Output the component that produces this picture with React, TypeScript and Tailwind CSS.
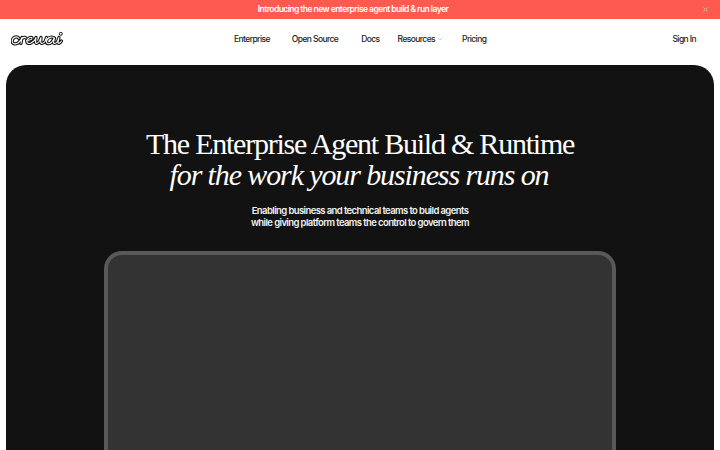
import { X, ChevronDown } from 'lucide-react';

const navLinks = [
  { label: 'Enterprise', className: 'ml-[171px]' },
  { label: 'Open Source', className: 'ml-[22px]' },
  { label: 'Docs', className: 'ml-[23px]' },
  { label: 'Resources', className: 'ml-[18px]' },
  { label: 'Pricing', className: 'ml-[18px]' },
];

const logoPath =
  'M8 7.5C6 4.5 1.5 6 1.2 10C1 13 4 13.5 7 12L9.5 9.5L11 6.5L10 12.5M11 8C12 6 14 6 15 7M15.5 9.5C18 9.5 21.5 8.5 21 6.8C20 5.5 16.5 7 15.8 10C15.5 12.5 18 13 20 12L23.5 9.5L25 6.5L24.5 11.5C25 13 27 12.5 28.5 10L30 6.5L29.7 11.5C30 13 32.5 12.5 34 10.5L35.5 6.5M43.5 7.5C41 4.5 36 6.5 35.5 10.5C35.3 13 38 13.5 40.5 11.5L43.5 7L42.5 11.5C42.5 13 44.5 12.8 46.5 10.5L48 6.5L47 11.5C47 13 49 12.5 50.5 10';

function Logo() {
  return (
    <svg width="52" height="16" viewBox="0 0 52 16" fill="none" className="block shrink-0">
      <path d={logoPath} stroke="#111" strokeWidth="3.2" strokeLinecap="round" strokeLinejoin="round" />
      <path d={logoPath} stroke="#fff" strokeWidth="1.1" strokeLinecap="round" strokeLinejoin="round" />
      <circle cx="49.8" cy="2.8" r="1.5" fill="#fff" stroke="#111" strokeWidth="1" />
    </svg>
  );
}

export default function App() {
  return (
    <div className="h-[450px] w-[720px] overflow-hidden bg-white font-['Inter',sans-serif]">
      {/* Announcement */}
      <div className="relative flex h-[19px] items-center justify-center bg-[#ff5a50] pr-[14px] text-[8.5px] font-semibold tracking-[-0.065em] text-white">
        Introducing the new enterprise agent build &amp; run layer
        <X className="absolute right-[10px] top-[5px] h-[9px] w-[9px] text-[#ffc4bf]" strokeWidth={2} />
      </div>

      {/* Nav */}
      <nav className="mb-[6px] flex h-[40px] items-center pl-[11px] pr-[24px] text-[8.5px] font-medium tracking-[-0.07em] text-[#222]">
        <Logo />
        {navLinks.map((link) => (
          <span key={link.label} className={`flex items-center gap-[1px] ${link.className}`}>
            {link.label}
            {link.label === 'Resources' && <ChevronDown className="h-2 w-2 text-[#8fb8cc]" strokeWidth={2} />}
          </span>
        ))}
        <span className="ml-auto">Sign In</span>
      </nav>

      {/* Hero */}
      <main className="mx-[6px] flex h-[400px] flex-col items-center rounded-t-[20px] bg-[#121212] pt-[63px]">
        <h1 className="text-center font-['Liberation_Serif',serif] text-[30px] leading-[31px] tracking-[-0.041em] text-white">
          The Enterprise Agent Build &amp; Runtime
          <br />
          <em className="pr-[2px] tracking-[-0.037em]">for the work your business runs on</em>
        </h1>
        <p className="mt-[15px] text-center text-[9.5px] font-semibold leading-[12px] tracking-[-0.063em] text-[#f2f2f2]">
          Enabling business and technical teams to build agents
          <br />
          while giving platform teams the control to govern them
        </p>
        <div className="mt-[22px] h-[300px] w-[512px] shrink-0 rounded-t-[18px] border-[4px] border-b-0 border-[#595959] bg-[#333333]" />
      </main>
    </div>
  );
}
